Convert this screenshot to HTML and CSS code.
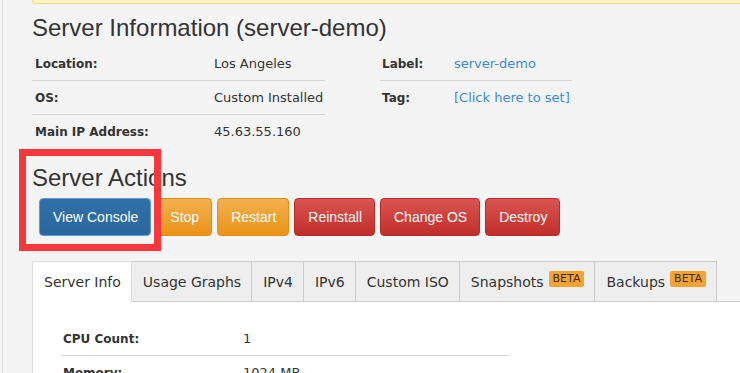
FILE: index.html
```html
<!DOCTYPE html>
<html lang="en">
<head>
    <meta charset="UTF-8">
    <title>Server Information (server-demo)</title>
    <link rel="stylesheet" href="styles.css">
</head>
<body>
    <div class="page">
        <div class="alert"></div>

        <h2>Server Information (server-demo)</h2>
        <div class="info-grid">
            <div class="info-table left">
                <div class="info-row"><span class="label">Location:</span><span>Los Angeles</span></div>
                <div class="info-row"><span class="label">OS:</span><span>Custom Installed</span></div>
                <div class="info-row"><span class="label">Main IP Address:</span><span>45.63.55.160</span></div>
            </div>
            <div class="info-table right">
                <div class="info-row"><span class="label">Label:</span><a href="#">server-demo</a></div>
                <div class="info-row"><span class="label">Tag:</span><a href="#">[Click here to set]</a></div>
            </div>
        </div>

        <h2 class="actions-title">Server Actions</h2>
        <div class="actions">
            <button class="btn btn-primary">View Console</button>
            <button class="btn btn-warning">Stop</button>
            <button class="btn btn-warning">Restart</button>
            <button class="btn btn-danger">Reinstall</button>
            <button class="btn btn-danger">Change OS</button>
            <button class="btn btn-danger">Destroy</button>
        </div>

        <div class="tabs">
            <div class="tab active">Server Info</div>
            <div class="tab">Usage Graphs</div>
            <div class="tab">IPv4</div>
            <div class="tab">IPv6</div>
            <div class="tab">Custom ISO</div>
            <div class="tab">Snapshots <span class="badge">BETA</span></div>
            <div class="tab">Backups <span class="badge">BETA</span></div>
        </div>
        <div class="tab-panel">
            <div class="info-table panel">
                <div class="info-row"><span class="label">CPU Count:</span><span>1</span></div>
                <div class="info-row"><span class="label">Memory:</span><span>1024 MB</span></div>
            </div>
        </div>
    </div>

    <!-- highlight box drawn over the screenshot -->
    <div class="highlight"></div>
</body>
</html>
```

FILE: styles.css
```css
body {
    margin: 0;
    background-color: #f4f4f4;
    color: #333;
    font-family: "DejaVu Sans", Verdana, sans-serif;
    font-size: 13px;
    position: relative;
    overflow: hidden;
}
.page {
    margin-left: 2px;
    border-left: 1px solid #dedede;
    padding-left: 29px;
    min-height: 373px;
}
.alert {
    height: 3px;
    background-color: #fdf2c6;
    border-left: 1px solid #f6d990;
    border-bottom: 1px solid #f6d990;
    border-radius: 0 0 0 4px;
}
h2 {
    font-family: "Liberation Sans", Arial, sans-serif;
    font-weight: normal;
    font-size: 24px;
    line-height: 26px;
    margin: 11px 0 6px;
    color: #333;
}
.info-grid {
    display: flex;
    gap: 55px;
}
.info-table.left {
    width: 293px;
}
.info-table.right {
    width: 192px;
}
.info-row {
    display: grid;
    grid-template-columns: 182px 1fr;
    align-items: center;
    height: 33px;
    border-bottom: 1px solid #d6d6d6;
}
.info-row:last-child {
    border-bottom: none;
}
.right .info-row {
    grid-template-columns: 74px 1fr;
}
.label {
    font-weight: bold;
    font-size: 12px;
    padding-left: 3px;
}
.right .label {
    padding-left: 2px;
}
a {
    color: #3a8bd8;
    text-decoration: none;
}
.actions-title {
    margin-top: 17px;
    margin-bottom: 7px;
}
.actions {
    display: flex;
    gap: 5px;
    padding-left: 7px;
}
.btn {
    font-family: "Liberation Sans", Arial, sans-serif;
    font-size: 14px;
    line-height: 18px;
    padding: 9px 12px 9px 13px;
    border: 1px solid;
    border-radius: 4px;
    color: white;
    cursor: pointer;
}
.btn-primary {
    background: linear-gradient(#3070a8, #2a679d);
    border-color: #5d9bd4;
}
.btn-warning {
    background: linear-gradient(#f2b04f, #eb9317);
    border-color: #e38d13;
}
.btn-danger {
    background: linear-gradient(#da5550, #c12e2a);
    border-color: #b92c28;
}
.tabs {
    display: flex;
    align-items: flex-start;
    margin-top: 25px;
    border-bottom: 1px solid #cccccc;
}
.tab {
    display: flex;
    align-items: center;
    box-sizing: border-box;
    height: 40px;
    padding: 0 10px 0 11px;
    font-size: 14px;
    background-color: #eeeeee;
    border: 1px solid #cccccc;
    border-bottom: none;
    margin-left: -1px;
}
.tab.active {
    margin-left: 0;
    height: 41px;
    margin-bottom: -1px;
    background-color: white;
    border-color: #dddddd;
    position: relative;
}
.badge {
    font-size: 11px;
    line-height: 14px;
    padding: 1px 4px;
    margin-left: 5px;
    margin-bottom: 6px;
    border-radius: 2px;
    background-color: #f8a233;
    color: #3b2a12;
}
.tab-panel {
    background-color: white;
    border-left: 1px solid #dddddd;
    padding: 20px 0 0 28px;
    min-height: 80px;
}
.info-table.panel {
    width: 448px;
}
.panel .label {
    padding-left: 2px;
}
.highlight {
    position: absolute;
    left: 19px;
    top: 149px;
    width: 128px;
    height: 88px;
    border: 7px solid #f6383c;
}
```
